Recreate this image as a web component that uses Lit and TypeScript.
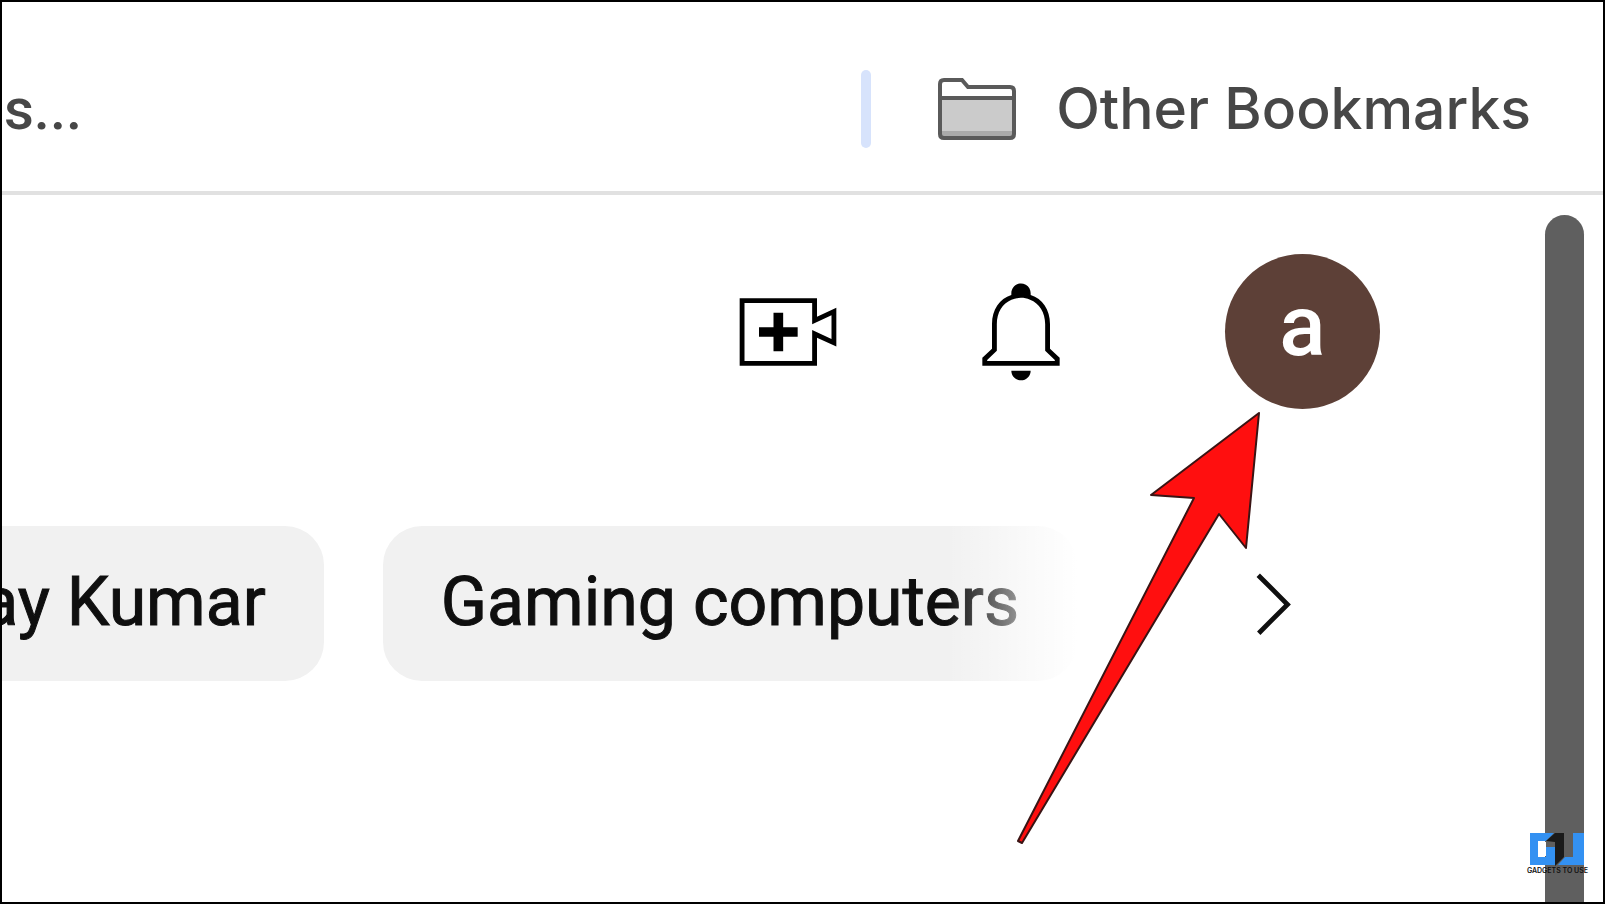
import { LitElement, html, css } from "lit";
import { customElement } from "lit/decorators.js";

@customElement("app-root")
export class AppRoot extends LitElement {
  static styles = css`
    :host {
      display: block;
      position: relative;
      box-sizing: border-box;
      height: 100vh;
      overflow: hidden;
      border: 2px solid #000;
      background: #fff;
    }
    *,
    *::before {
      box-sizing: border-box;
    }
    button {
      border: 0;
      padding: 0;
      background: none;
      font: inherit;
      color: inherit;
      cursor: pointer;
      flex: none;
    }
    svg {
      display: block;
    }
    .shell {
      display: flex;
      flex-direction: column;
      height: 100%;
    }
    .bookmarks {
      display: flex;
      align-items: center;
      height: 193px;
      padding: 28px 72px 4px 2px;
      border-bottom: 4px solid #e1e1e1;
      font: 500 58px/76px Roboto, sans-serif;
      color: #474747;
      flex: none;
    }
    .bookmarks a {
      color: inherit;
      text-decoration: none;
      white-space: nowrap;
    }
    .spacer {
      flex: 1;
    }
    .divider {
      width: 10px;
      height: 78px;
      border-radius: 5px;
      background: #d7e3fc;
      margin-right: 67px;
    }
    .folder {
      display: flex;
      align-items: center;
      gap: 40px;
      font: 500 57px/76px Inter, sans-serif;
    }
    .viewport {
      display: flex;
      flex: 1;
      min-height: 0;
    }
    .page {
      flex: 1;
      min-width: 0;
      padding-top: 59px;
    }
    .actions {
      display: flex;
      justify-content: flex-end;
      align-items: center;
      padding-right: 165px;
      gap: 117px;
    }
    .avatar {
      width: 155px;
      height: 155px;
      margin-left: 29px;
      padding-bottom: 12px;
      border-radius: 50%;
      background: #5d4037;
      color: #fff;
      font: 500 86px/100px Roboto, sans-serif;
      text-align: center;
    }
    .filters {
      display: flex;
      align-items: center;
      margin-top: 117px;
      padding-right: 214px;
      gap: 138px;
    }
    .chips {
      position: relative;
      display: flex;
      flex: 1;
      min-width: 0;
      justify-content: flex-end;
      gap: 59px;
      overflow: hidden;
    }
    .chips::after {
      content: "";
      position: absolute;
      inset: 0 0 0 auto;
      width: 130px;
      background: linear-gradient(to right, #fff0, #fff);
    }
    .chip {
      height: 155px;
      padding: 0 58px 4px;
      border-radius: 39px;
      background: #f1f1f1;
      color: #0f0f0f;
      font: 400 68px/80px Roboto, sans-serif;
      -webkit-text-stroke: 1px #0f0f0f;
      white-space: nowrap;
    }
    .chip.cut {
      padding-left: 0;
      border-radius: 0 39px 39px 0;
    }
    .track {
      width: 58px;
      padding: 20px 19px 0 0;
      flex: none;
    }
    .thumb {
      height: 100%;
      border-radius: 20px 20px 0 0;
      background: #5f5f5f;
    }
    .pointer {
      position: absolute;
      right: 343px;
      top: 408px;
      pointer-events: none;
    }
    .brand {
      position: absolute;
      right: 15px;
      bottom: 27px;
      display: flex;
      flex-direction: column;
      align-items: center;
      font: 600 7px/8px Inter, sans-serif;
      color: #111;
    }
  `;

  render() {
    return html`
      <div class="shell">
        <nav class="bookmarks" aria-label="Bookmarks">
          <a href="#">s...</a>
          <span class="spacer"></span>
          <span class="divider"></span>
          <a class="folder" href="#">
            <svg width="78" height="62" viewBox="0 0 78 62" aria-hidden="true">
              <path d="M2 22h74v34q0 4-4 4H6q-4 0-4-4z" fill="#cbcbcb" />
              <path d="M4 53h70v6H4z" fill="#aaa" />
              <path d="M2 6q0-4 4-4h18l6 7h42q4 0 4 4v43q0 4-4 4H6q-4 0-4-4zM2 20h74" fill="none" stroke="#5a5a5a" stroke-width="4" />
            </svg>
            <span>Other Bookmarks</span>
          </a>
        </nav>
        <div class="viewport">
          <main class="page">
            <div class="actions">
              <button aria-label="Create">
                <svg width="116" height="116" viewBox="0 0 24 24">
                  <path d="M14,13h-3v3H9v-3H6v-2h3V8h2v3h3V13z M17,6H3v12h14v-6.39l4,1.83V8.56l-4,1.83V6 M18,5v3.83L22,7v8l-4-1.83V19H2V5H18L18,5z" />
                </svg>
              </button>
              <button aria-label="Notifications">
                <svg width="116" height="116" viewBox="0 0 24 24">
                  <path d="M10,20h4c0,1.1-0.9,2-2,2S10,21.1,10,20z M20,17.35V19H4v-1.65l2-1.88v-5.15c0-2.92,1.56-5.22,4-5.98V3.96c0-1.42,1.49-2.5,2.99-1.76C13.64,2.52,14,3.23,14,3.96l0,0.39c2.44,0.75,4,3.06,4,5.98v5.15L20,17.35z M19,17.77l-2-1.88v-5.47c0-2.47-1.19-4.36-3.13-5.1c-1.26-0.53-2.64-0.5-3.84,0.03C8.15,6.11,7,7.99,7,10.42v5.47l-2,1.88V18h14V17.77z" />
                </svg>
              </button>
              <button class="avatar">a</button>
            </div>
            <div class="filters">
              <div class="chips">
                <button class="chip cut">ay Kumar</button>
                <button class="chip">Gaming computers</button>
              </div>
              <button aria-label="Next">
                <svg width="116" height="116" viewBox="0 0 24 24">
                  <path d="M9.4 18.4l-.7-.7 5.6-5.6-5.7-5.7.7-.7 6.4 6.4-6.3 6.3z" fill="#0f0f0f" />
                </svg>
              </button>
            </div>
          </main>
          <div class="track"><div class="thumb"></div></div>
        </div>
      </div>
      <svg class="pointer" width="246" height="436" viewBox="0 0 246 436" aria-hidden="true">
        <path d="M245 3 137 85 180 88 4 431 8 433 205 104 232 138z" fill="#ff0f0f" stroke="#3a1414" stroke-width="2" stroke-linejoin="round" />
      </svg>
      <div class="brand">
        <svg width="54" height="34" viewBox="0 0 54 34" aria-hidden="true">
          <path d="M8 9h8v14H8z" fill="#fff" />
          <path d="M0 0h24l-8 8H8v16h8V14h9v18H0zM43 0h11v32H28l7-8h8z" fill="#3391f2" />
          <path d="M16 8 25 0h9v24l-9 9V9z" fill="#1a1a1a" />
        </svg>
        <span>GADGETS TO USE</span>
      </div>
    `;
  }
}
